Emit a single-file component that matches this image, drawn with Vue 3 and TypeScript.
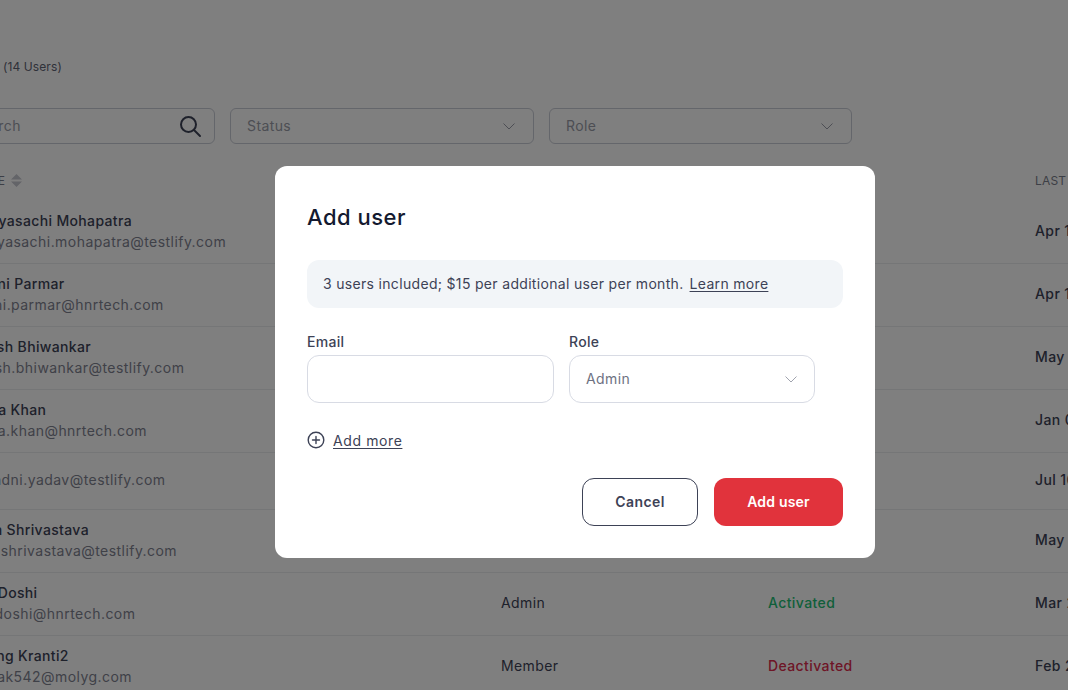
<script setup lang="ts">
interface Row { name: string; email: string; role: string; status: string; date: string }
const rows: Row[] = [
  { name: 'Sabyasachi Mohapatra', email: 'sabyasachi.mohapatra@testlify.com', role: 'Admin', status: 'Activated', date: 'Apr 12, 2024' },
  { name: 'Jhani Parmar', email: 'thani.parmar@hnrtech.com', role: 'Admin', status: 'Activated', date: 'Apr 10, 2024' },
  { name: 'Harsh Bhiwankar', email: 'harsh.bhiwankar@testlify.com', role: 'Admin', status: 'Activated', date: 'May 02, 2024' },
  { name: 'Ifsha Khan', email: 'ifsha.khan@hnrtech.com', role: 'Member', status: 'Activated', date: 'Jan 08, 2024' },
  { name: '', email: 'jhandni.yadav@testlify.com', role: 'Member', status: 'Activated', date: 'Jul 16, 2024' },
  { name: 'Disa Shrivastava', email: 'ishashrivastava@testlify.com', role: 'Admin', status: 'Activated', date: 'May 21, 2024' },
  { name: 'Ria Doshi', email: 'ria.doshi@hnrtech.com', role: 'Admin', status: 'Activated', date: 'Mar 25, 2024' },
  { name: 'Karng Kranti2', email: 'kanak542@molyg.com', role: 'Member', status: 'Deactivated', date: 'Feb 27, 2024' }
]
</script>

<template>
  <div class="page">
    <div class="heading"><span class="title">Users</span><span class="count">(14 Users)</span></div>
    <div class="filters">
      <div class="filter search">
        <span class="nudge">Search</span>
        <svg width="24" height="24" viewBox="0 0 24 24" fill="none" stroke="currentColor" stroke-width="2" stroke-linecap="round"><circle cx="10.5" cy="10.5" r="7.5" /><path d="M16 16l6 6" /></svg>
      </div>
      <div class="filter select">
        <span class="nudge">Status</span>
        <svg width="12" height="7" viewBox="0 0 12 7" fill="none" stroke="currentColor" stroke-width="1"><path d="M.5.5 6 6 11.500.5" /></svg>
      </div>
      <div class="filter select role-filter">
        <span class="nudge">Role</span>
        <svg width="12" height="7" viewBox="0 0 12 7" fill="none" stroke="currentColor" stroke-width="1"><path d="M.5.5 6 6 11.500.5" /></svg>
      </div>
    </div>
    <div class="thead">
      <div class="c-name-head th">NAME
        <svg class="sort" width="11" height="13" viewBox="0 0 11 13" fill="currentColor"><path d="M5.500 0 11 5.500H0zM0 7.500h11L5.500 13z" /></svg>
      </div>
      <div class="c-role th">ROLE</div>
      <div class="c-status th">STATUS</div>
      <div class="c-date th">LAST LOGIN</div>
    </div>
    <div v-for="r in rows" :key="r.email" class="row" :class="{ single: !r.name }">
      <div class="c-name">
        <div v-if="r.name" class="name">{{ r.name }}</div>
        <div class="email">{{ r.email }}</div>
      </div>
      <div class="c-role role-cell">{{ r.role }}</div>
      <div class="c-status cell" :class="r.status === 'Activated' ? 'on' : 'off'">{{ r.status }}</div>
      <div class="c-date cell">{{ r.date }}</div>
    </div>
  </div>

  <div class="overlay">
    <div class="modal">
      <h2>Add user</h2>
      <div class="info">
        <span>3 users included; $15 per additional user per month.</span>
        <a>Learn more</a>
      </div>
      <div class="fields">
        <div class="field">
          <label>Email</label>
          <div class="control"></div>
        </div>
        <div class="field">
          <label>Role</label>
          <div class="control dropdown">
            <span class="nudge">Admin</span>
            <svg width="12" height="7" viewBox="0 0 12 7" fill="none" stroke="currentColor" stroke-width="1"><path d="M.5.5 6 6 11.500.5" /></svg>
          </div>
        </div>
      </div>
      <div class="more">
        <svg width="18" height="18" viewBox="0 0 18 18" fill="none" stroke="currentColor" stroke-width="1.400" stroke-linecap="round"><circle cx="9" cy="9" r="7.800" /><path d="M9 5.500v7M5.500 9h7" /></svg>
        <a>Add more</a>
      </div>
      <div class="actions">
        <button class="cancel">Cancel</button>
        <button class="primary">Add user</button>
      </div>
    </div>
  </div>
</template>

<style>
html, body { height: 100%; margin: 0; overflow: hidden; background: #fff; }
</style>

<style scoped>
.page {
  width: 1300px;
  height: 690px;
  margin-left: -45px;
  padding-top: 57px;
  box-sizing: border-box;
  overflow: hidden;
  font-family: Inter, "Noto Sans", sans-serif;
  font-size: 14px;
  color: #3d4256;
}
.heading { display: flex; height: 18px; align-items: center; font-size: 12px; color: #5f6474; letter-spacing: 0.1px; }
.title { width: 48px; overflow: hidden; color: transparent; }
.filters { display: flex; gap: 15px; margin-top: 33px; }
.filter {
  height: 36px;
  box-sizing: border-box;
  border: 1px solid #c9ccd6;
  border-radius: 6px;
  display: flex;
  align-items: center;
  justify-content: space-between;
  padding: 0 18px 0 16px;
  color: #9a9da8;
  letter-spacing: 0.4px;
}
.nudge { padding-bottom: 2px; }
.search { width: 260px; padding-right: 12px; }
.search svg { color: #3d4256; }
.select { width: 304px; }
.role-filter { width: 303px; }
.thead { display: flex; height: 36px; margin-top: 18px; margin-bottom: 3px; align-items: center; padding-left: 17px; }
.th { font-size: 12px; color: #7b7f8c; display: flex; align-items: center; gap: 6px; letter-spacing: 0.2px; }
.c-name-head { width: 532px; flex: none; margin-left: -3px; margin-right: 0; }
.sort { color: #c6c8d0; }
.row {
  display: flex;
  height: 63px;
  align-items: center;
  padding-left: 17px;
  box-sizing: border-box;
  border-bottom: 1px solid #ebecef;
}
.row.single { height: 57px; }
.row.single .c-name { padding-bottom: 4px; }
.c-name { width: 529px; flex: none; box-sizing: border-box; padding-bottom: 2px; }
.c-role { width: 267px; flex: none; }
.c-status { width: 267px; flex: none; }
.c-date { white-space: nowrap; }
.row .c-role, .row .c-status, .row .c-date { padding-bottom: 4px; box-sizing: border-box; }
.name { font-weight: 500; line-height: 21px; color: #3d4256; letter-spacing: 0.35px; white-space: nowrap; }
.email { line-height: 21px; color: #7f8290; letter-spacing: 0.45px; white-space: nowrap; }
.role-cell { color: #3d4256; letter-spacing: 0.4px; }
.cell { font-weight: 500; color: #3d4256; letter-spacing: 0.4px; }
.on { color: #1fbf75; }
.off { color: #dd2c4d; }

.overlay { position: fixed; inset: 0; background: rgba(0, 0, 0, 0.5); }
.modal {
  position: absolute;
  left: 275px;
  top: 166px;
  width: 600px;
  height: 392px;
  box-sizing: border-box;
  padding: 32px;
  background: #fff;
  border-radius: 12px;
  font-family: Inter, "Noto Sans", sans-serif;
  font-size: 14px;
  color: #3d4256;
}
h2 { margin: 0; height: 38px; line-height: 38px; font-size: 22px; font-weight: 500; color: #141a30; letter-spacing: 0.5px; }
.info {
  margin-top: 24px;
  height: 48px;
  padding: 0 16px 2px;
  box-sizing: border-box;
  border-radius: 12px;
  background: #f2f5f8;
  display: flex;
  align-items: center;
  gap: 6px;
  letter-spacing: 0.32px;
}
a { text-decoration: underline; text-underline-offset: 2px; }
.fields { display: flex; gap: 15px; margin-top: 24px; }
.field { width: 247px; }
.field label { display: block; height: 23px; line-height: 20px; font-weight: 500; letter-spacing: 0.3px; }
.control {
  height: 48px;
  box-sizing: border-box;
  border: 1px solid #d8dbe4;
  border-radius: 12px;
}
.dropdown {
  width: 246px;
  display: flex;
  align-items: center;
  justify-content: space-between;
  padding: 0 17px 0 16px;
  color: #6e7282;
  letter-spacing: 0.4px;
}
.dropdown svg { color: #a0a3ae; }
.more { display: flex; align-items: center; gap: 8px; margin-top: 27px; height: 20px; letter-spacing: 0.6px; }
.actions { display: flex; justify-content: flex-end; gap: 16px; margin-top: 28px; }
button {
  height: 48px;
  border-radius: 12px;
  padding: 0 0 2px;
  font-family: inherit;
  font-size: 14px;
  font-weight: 600;
}
.cancel { width: 116px; background: #fff; border: 1px solid #3d4256; color: #3d4256; letter-spacing: 0.4px; }
.primary { width: 129px; background: #e1333c; border: 0; color: #fff; letter-spacing: 0.2px; }
</style>
